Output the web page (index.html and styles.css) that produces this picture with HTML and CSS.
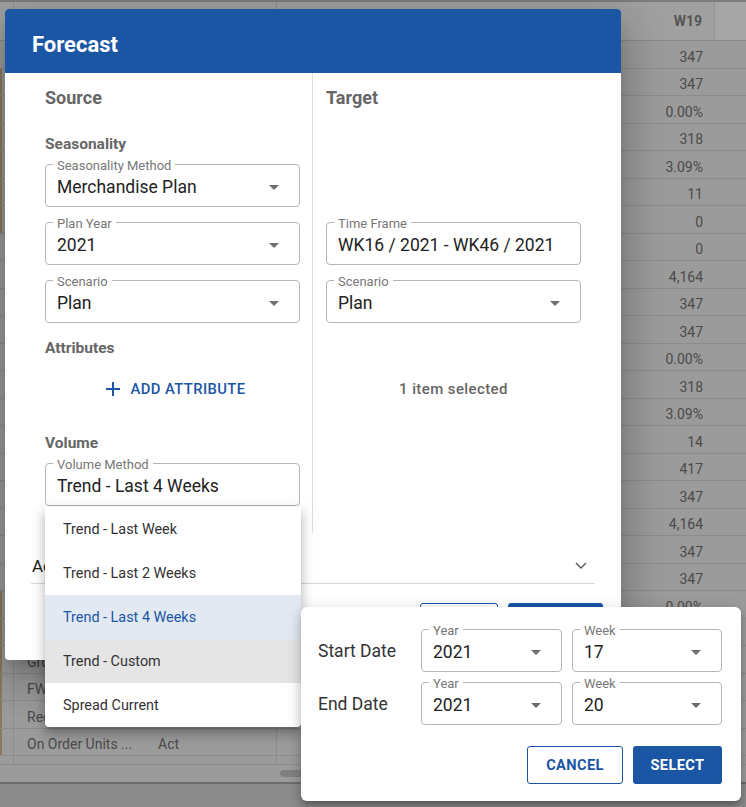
FILE: index.html
```html
<!DOCTYPE html>
<html lang="en">
<head>
  <meta charset="UTF-8">
  <meta name="viewport" content="width=device-width, initial-scale=1.0">
  <title>Forecast</title>
  <link rel="stylesheet" href="styles.css">
</head>
<body>
  <!-- plan grid behind the modal -->
  <div class="grid">
    <div class="grid-head">
      <div class="c-edge"></div>
      <div class="c-name">Measure</div>
      <div class="c-type">Type</div>
      <div class="c-week">W16</div>
      <div class="c-week">W17</div>
      <div class="c-week">W18</div>
      <div class="c-week last">W19</div>
      <div class="c-fill"></div>
    </div>
    <div class="grid-row"><div class="c-edge"></div><div class="c-name">Sales Units</div><div class="c-type">Plan</div><div class="c-week"></div><div class="c-week"></div><div class="c-week"></div><div class="c-week">347</div></div>
    <div class="grid-row"><div class="c-edge tag"></div><div class="c-name">Sales Units</div><div class="c-type">Fcst</div><div class="c-week"></div><div class="c-week"></div><div class="c-week"></div><div class="c-week">347</div></div>
    <div class="grid-row"><div class="c-edge tag"></div><div class="c-name">Sales Units</div><div class="c-type">Var</div><div class="c-week"></div><div class="c-week"></div><div class="c-week"></div><div class="c-week">0.00%</div></div>
    <div class="grid-row"><div class="c-edge tag"></div><div class="c-name">Sales Units</div><div class="c-type">LY</div><div class="c-week"></div><div class="c-week"></div><div class="c-week"></div><div class="c-week">318</div></div>
    <div class="grid-row"><div class="c-edge tag"></div><div class="c-name">Sales Units</div><div class="c-type">Var LY</div><div class="c-week"></div><div class="c-week"></div><div class="c-week"></div><div class="c-week">3.09%</div></div>
    <div class="grid-row"><div class="c-edge tag"></div><div class="c-name">Markdown</div><div class="c-type">Plan</div><div class="c-week"></div><div class="c-week"></div><div class="c-week"></div><div class="c-week">11</div></div>
    <div class="grid-row"><div class="c-edge tag"></div><div class="c-name">Receipts</div><div class="c-type">Plan</div><div class="c-week"></div><div class="c-week"></div><div class="c-week"></div><div class="c-week">0</div></div>
    <div class="grid-row"><div class="c-edge"></div><div class="c-name">On Order</div><div class="c-type">Act</div><div class="c-week"></div><div class="c-week"></div><div class="c-week"></div><div class="c-week">0</div></div>
    <div class="grid-row"><div class="c-edge"></div><div class="c-name">Stock</div><div class="c-type">Plan</div><div class="c-week"></div><div class="c-week"></div><div class="c-week"></div><div class="c-week">4,164</div></div>
    <div class="grid-row"><div class="c-edge"></div><div class="c-name">Sales Units</div><div class="c-type">Plan</div><div class="c-week"></div><div class="c-week"></div><div class="c-week"></div><div class="c-week">347</div></div>
    <div class="grid-row"><div class="c-edge"></div><div class="c-name">Sales Units</div><div class="c-type">Fcst</div><div class="c-week"></div><div class="c-week"></div><div class="c-week"></div><div class="c-week">347</div></div>
    <div class="grid-row"><div class="c-edge"></div><div class="c-name">Sales Units</div><div class="c-type">Var</div><div class="c-week"></div><div class="c-week"></div><div class="c-week"></div><div class="c-week">0.00%</div></div>
    <div class="grid-row"><div class="c-edge"></div><div class="c-name">Sales Units</div><div class="c-type">LY</div><div class="c-week"></div><div class="c-week"></div><div class="c-week"></div><div class="c-week">318</div></div>
    <div class="grid-row"><div class="c-edge"></div><div class="c-name">Sales Units</div><div class="c-type">Var LY</div><div class="c-week"></div><div class="c-week"></div><div class="c-week"></div><div class="c-week">3.09%</div></div>
    <div class="grid-row"><div class="c-edge"></div><div class="c-name">Markdown</div><div class="c-type">Plan</div><div class="c-week"></div><div class="c-week"></div><div class="c-week"></div><div class="c-week">14</div></div>
    <div class="grid-row"><div class="c-edge"></div><div class="c-name">Receipts</div><div class="c-type">Plan</div><div class="c-week"></div><div class="c-week"></div><div class="c-week"></div><div class="c-week">417</div></div>
    <div class="grid-row"><div class="c-edge"></div><div class="c-name">Sales Units</div><div class="c-type">Plan</div><div class="c-week"></div><div class="c-week"></div><div class="c-week"></div><div class="c-week">347</div></div>
    <div class="grid-row"><div class="c-edge"></div><div class="c-name">Stock</div><div class="c-type">Plan</div><div class="c-week"></div><div class="c-week"></div><div class="c-week"></div><div class="c-week">4,164</div></div>
    <div class="grid-row"><div class="c-edge"></div><div class="c-name">Sales Units</div><div class="c-type">Plan</div><div class="c-week"></div><div class="c-week"></div><div class="c-week"></div><div class="c-week">347</div></div>
    <div class="grid-row"><div class="c-edge"></div><div class="c-name">Sales Units</div><div class="c-type">Fcst</div><div class="c-week"></div><div class="c-week"></div><div class="c-week"></div><div class="c-week">347</div></div>
    <div class="grid-row"><div class="c-edge tag"></div><div class="c-name">Sales Units</div><div class="c-type">Var</div><div class="c-week"></div><div class="c-week"></div><div class="c-week"></div><div class="c-week">0.00%</div></div>
    <div class="grid-row"><div class="c-edge tag"></div><div class="c-name">Sales Units</div><div class="c-type">LY</div><div class="c-week"></div><div class="c-week"></div><div class="c-week"></div><div class="c-week">318</div></div>
    <div class="grid-row"><div class="c-edge tag"></div><div class="c-name">Gross Margin</div><div class="c-type">Plan</div><div class="c-week"></div><div class="c-week"></div><div class="c-week"></div><div class="c-week">3.09%</div></div>
    <div class="grid-row"><div class="c-edge tag"></div><div class="c-name">FWOS</div><div class="c-type">Plan</div><div class="c-week"></div><div class="c-week"></div><div class="c-week"></div><div class="c-week">11</div></div>
    <div class="grid-row"><div class="c-edge tag"></div><div class="c-name">Receipt Units</div><div class="c-type">Plan</div><div class="c-week"></div><div class="c-week"></div><div class="c-week"></div><div class="c-week">0</div></div>
    <div class="grid-row"><div class="c-edge tag"></div><div class="c-name">On Order Units ...</div><div class="c-type">Act</div><div class="c-week"></div><div class="c-week"></div><div class="c-week"></div><div class="c-week">0</div></div>
    <div class="grid-tail"><div class="c-edge"></div><div class="c-name"></div><div class="c-type"></div></div>
    <div class="grid-scroll"><div class="thumb"></div></div>
    <div class="grid-foot"></div>
  </div>

  <!-- Forecast modal -->
  <div class="dialog">
    <div class="dialog-title">Forecast</div>
    <div class="dialog-body">
      <div class="col col-source">
        <h2 class="heading">Source</h2>
        <h3 class="subheading">Seasonality</h3>
        <div class="field">
          <label>Seasonality Method</label>
          <span class="value">Merchandise Plan</span>
          <i class="caret"></i>
        </div>
        <div class="field">
          <label>Plan Year</label>
          <span class="value">2021</span>
          <i class="caret"></i>
        </div>
        <div class="field">
          <label>Scenario</label>
          <span class="value">Plan</span>
          <i class="caret"></i>
        </div>
        <h3 class="subheading attr">Attributes</h3>
        <div class="add-attr">
          <svg width="14" height="14" viewBox="0 0 14 14"><path d="M7 0v14M0 7h14" stroke="#1b56a4" stroke-width="2" fill="none"/></svg>
          <span>ADD ATTRIBUTE</span>
        </div>
        <h3 class="subheading volume">Volume</h3>
        <div class="field open">
          <label>Volume Method</label>
          <span class="value">Trend - Last 4 Weeks</span>
        </div>
      </div>
      <div class="col col-target">
        <h2 class="heading">Target</h2>
        <div class="field timeframe">
          <label>Time Frame</label>
          <span class="value">WK16 / 2021 - WK46 / 2021</span>
        </div>
        <div class="field">
          <label>Scenario</label>
          <span class="value">Plan</span>
          <i class="caret"></i>
        </div>
        <div class="selected-info">1 item selected</div>
      </div>
    </div>
    <div class="accordion">
      <span>Advanced Settings</span>
      <svg width="12" height="7" viewBox="0 0 12 7"><path d="M1 1l5 5 5-5" stroke="#555" stroke-width="1.4" fill="none"/></svg>
    </div>
    <div class="dialog-actions">
      <button class="btn btn-outline">CANCEL</button>
      <button class="btn btn-fill">FORECAST</button>
    </div>
  </div>

  <!-- volume method dropdown -->
  <div class="menu">
    <div class="menu-item">Trend - Last Week</div>
    <div class="menu-item">Trend - Last 2 Weeks</div>
    <div class="menu-item selected">Trend - Last 4 Weeks</div>
    <div class="menu-item hover">Trend - Custom</div>
    <div class="menu-item">Spread Current</div>
  </div>

  <!-- custom range popup -->
  <div class="range">
    <div class="range-grid">
      <div class="range-label">Start Date</div>
      <div class="field">
        <label>Year</label>
        <span class="value">2021</span>
        <i class="caret"></i>
      </div>
      <div class="field">
        <label>Week</label>
        <span class="value">17</span>
        <i class="caret"></i>
      </div>
      <div class="range-label">End Date</div>
      <div class="field">
        <label>Year</label>
        <span class="value">2021</span>
        <i class="caret"></i>
      </div>
      <div class="field">
        <label>Week</label>
        <span class="value">20</span>
        <i class="caret"></i>
      </div>
    </div>
    <div class="range-actions">
      <button class="btn btn-outline cancel">CANCEL</button>
      <button class="btn btn-fill select">SELECT</button>
    </div>
  </div>
</body>
</html>
```

FILE: styles.css
```css
* {
  box-sizing: border-box;
}

body {
  margin: 0;
  width: 746px;
  height: 807px;
  overflow: hidden;
  position: relative;
  font-family: Roboto, "Noto Sans", Arial, sans-serif;
  background: #9b9b9b;
  color: #222;
}

.grid {
  width: 746px;
  height: 807px;
  display: flex;
  flex-direction: column;
  border-top: 2px solid #7c7c7c;
  font-size: 14px;
  color: #4a4a4a;
}

.grid-head {
  display: flex;
  height: 39px;
  flex-shrink: 0;
  background: #a0a0a0;
  border-bottom: 1px solid #8a8a8a;
  font-weight: 700;
  color: #555;
}

.grid-row, .grid-tail {
  display: flex;
  height: 27.5px;
  flex-shrink: 0;
  border-bottom: 1px solid #8c8c8c;
}

.grid-tail {
  height: 9px;
}

.grid-head > div, .grid-row > div {
  display: flex;
  align-items: center;
  white-space: nowrap;
  overflow: hidden;
}

.grid-row > div {
  padding-top: 5px;
}

.c-edge {
  width: 14px;
  border-right: 1px solid #8c8c8c;
}

.c-edge.tag {
  box-shadow: inset 2px 0 #8c7a5e;
}

.c-name {
  width: 132px;
  padding-left: 13px;
}

.c-type {
  width: 131px;
  padding-left: 12px;
  border-right: 1px solid #8c8c8c;
}

.c-week {
  width: 109.5px;
  justify-content: flex-end;
  padding-right: 12px;
}

.grid-head .c-week.last {
  border-right: 1px solid #929292;
}

.grid-head .c-fill {
  flex: 1;
  background: #a6a6a6;
}

.grid-scroll {
  height: 17px;
  flex-shrink: 0;
  padding: 5px 0 0 280px;
}

.thumb {
  width: 60px;
  height: 7px;
  border-radius: 4px;
  background: #808080;
}

.grid-foot {
  flex: 1;
  border-top: 2px solid #6d6d6d;
  background: #8c8c8c;
}

/* modal */
.dialog {
  position: absolute;
  left: 5px;
  top: 9px;
  width: 616px;
  height: 651px;
  background: #fff;
  border-radius: 4px;
  overflow: hidden;
  box-shadow: 0 11px 15px -7px rgba(0, 0, 0, 0.2), 0 24px 38px 3px rgba(0, 0, 0, 0.14), 0 9px 46px 8px rgba(0, 0, 0, 0.12);
}

.dialog-title {
  height: 64px;
  padding: 7px 0 0 27px;
  line-height: 57px;
  background: #1b56a4;
  color: #fff;
  font-size: 22px;
  font-weight: 700;
}

.dialog-body {
  display: flex;
  height: 460px;
  padding-left: 40px;
}

.col {
  padding-top: 15px;
}

.col-source {
  width: 268px;
  border-right: 1px solid #dedede;
}

.col-target {
  padding-left: 13px;
}

.heading {
  margin: 0;
  font-size: 18px;
  line-height: 20px;
  font-weight: 700;
  color: #666;
}

.subheading {
  margin: 27px 0 11px;
  font-size: 15.5px;
  line-height: 18px;
  font-weight: 700;
  color: #666;
}

.subheading.attr {
  margin: 16px 0 0;
}

.subheading.volume {
  margin: 27px 0 11px;
}

/* outlined select */
.field {
  position: relative;
  width: 255px;
  height: 43px;
  display: flex;
  align-items: center;
  padding: 3px 20px 0 11px;
  border: 1px solid #b5b5b5;
  border-radius: 4px;
  background: #fff;
}

.field + .field {
  margin-top: 15px;
}

.field label {
  position: absolute;
  top: -6px;
  left: 7px;
  padding: 0 4px;
  background: #fff;
  font-size: 13px;
  line-height: 13px;
  color: #777;
}

.field .value {
  flex: 1;
  font-size: 17.5px;
  color: #222;
  white-space: nowrap;
}

.caret {
  width: 0;
  height: 0;
  border-left: 5px solid transparent;
  border-right: 5px solid transparent;
  border-top: 5px solid #6e6e6e;
}

.field.timeframe {
  margin-top: 114px;
}

.add-attr {
  display: flex;
  align-items: center;
  justify-content: center;
  gap: 11px;
  width: 255px;
  height: 36px;
  margin-top: 14px;
  padding-left: 6px;
  color: #1b56a4;
  font-size: 14.8px;
  font-weight: 500;
  letter-spacing: 0.4px;
}

.selected-info {
  width: 255px;
  height: 36px;
  margin-top: 48px;
  display: flex;
  align-items: center;
  justify-content: center;
  font-size: 15px;
  font-weight: 500;
  letter-spacing: 0.4px;
  color: #666;
}

.accordion {
  display: flex;
  align-items: center;
  justify-content: space-between;
  height: 36px;
  margin: 15px 26px 0;
  padding: 0 8px 0 1px;
  border-bottom: 1px solid #d5d8de;
  font-size: 17px;
  color: #222;
}

.dialog-actions {
  display: flex;
  justify-content: flex-end;
  gap: 10px;
  margin-top: 19px;
  padding-right: 18px;
}

.btn {
  height: 36px;
  border-radius: 3px;
  font-family: inherit;
  font-size: 14.6px;
  font-weight: 700;
  letter-spacing: 0.4px;
  cursor: pointer;
}

.btn-outline {
  width: 78px;
  background: #fff;
  color: #1b56a4;
  border: 1px solid #1b56a4;
}

.btn-fill {
  width: 95px;
  background: #1b56a4;
  color: #fff;
  border: none;
}

/* dropdown */
.menu {
  position: absolute;
  left: 45px;
  top: 507px;
  width: 256px;
  background: #fff;
  border-radius: 0 0 4px 4px;
  overflow: hidden;
  box-shadow: 0 5px 5px -3px rgba(0, 0, 0, 0.2), 0 8px 10px 1px rgba(0, 0, 0, 0.14), 0 3px 14px 2px rgba(0, 0, 0, 0.12);
}

.menu-item {
  height: 44px;
  display: flex;
  align-items: center;
  padding-left: 18px;
  font-size: 14.4px;
  color: #333;
}

.menu-item.selected {
  background: #e2e9f3;
  color: #1b56a4;
}

.menu-item.hover {
  background: #e5e5e5;
}

/* custom range popup */
.range {
  position: absolute;
  left: 301px;
  top: 607px;
  width: 440px;
  height: 194px;
  padding: 22px 19px 0 17px;
  background: #fff;
  border-radius: 6px;
  box-shadow: 0 5px 5px -3px rgba(0, 0, 0, 0.2), 0 8px 10px 1px rgba(0, 0, 0, 0.14), 0 3px 14px 2px rgba(0, 0, 0, 0.12);
}

.range-grid {
  display: grid;
  grid-template-columns: 93px 141px 150px;
  column-gap: 10px;
  row-gap: 10px;
  align-items: center;
}

.range-grid .field {
  width: auto;
  margin: 0;
}

.range-label {
  font-size: 17.5px;
  color: #333;
}

.range-actions {
  display: flex;
  justify-content: flex-end;
  gap: 10px;
  margin-top: 21px;
}

.range-actions .btn {
  height: 38px;
}

.range-actions .cancel {
  width: 96px;
}

.range-actions .select {
  width: 89px;
}
```
